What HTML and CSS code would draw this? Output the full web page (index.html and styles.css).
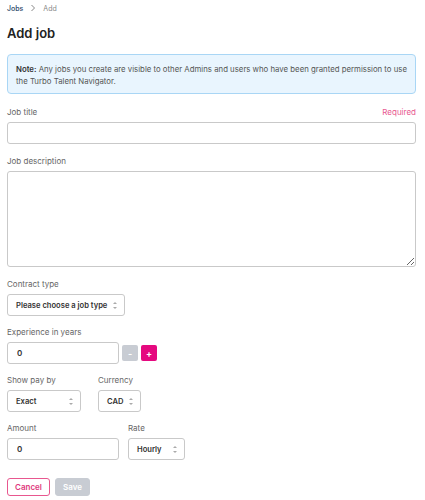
FILE: index.html
```html
<!DOCTYPE html>
<html lang="en">
<head>
	<meta charset="UTF-8">
	<title>Add job</title>
	<link rel="stylesheet" href="styles.css">
</head>
<body>
	<div class="page">
		<div class="crumbs">
			<a href="#">Jobs</a>
			<svg width="8" height="8" viewBox="0 0 8 8"><path d="M2.5 1l3 3-3 3" fill="none" stroke="#888" stroke-width="1"/></svg>
			<span>Add</span>
		</div>
		<h1>Add job</h1>
		<div class="note"><b>Note:</b> Any jobs you create are visible to other Admins and users who have been granted permission to use the Turbo Talent Navigator.</div>

		<div class="field first">
			<div class="label-row"><label>Job title</label><span class="req">Required</span></div>
			<input class="input full" type="text">
		</div>
		<div class="field wide">
			<div class="label-row"><label>Job description</label></div>
			<textarea class="input full area"></textarea>
		</div>
		<div class="field wide">
			<div class="label-row"><label>Contract type</label></div>
			<div class="select w-contract">Please choose a job type <i class="arr"></i></div>
		</div>
		<div class="field">
			<div class="label-row"><label>Experience in years</label></div>
			<div class="row">
				<input class="input w-num" type="text" value="0">
				<button class="step minus">-</button>
				<button class="step plus">+</button>
			</div>
		</div>
		<div class="row cols">
			<div class="field">
				<div class="label-row"><label>Show pay by</label></div>
				<div class="select w-exact">Exact <i class="arr"></i></div>
			</div>
			<div class="field">
				<div class="label-row"><label>Currency</label></div>
				<div class="select w-cad">CAD <i class="arr"></i></div>
			</div>
		</div>
		<div class="row cols2">
			<div class="field">
				<div class="label-row"><label>Amount</label></div>
				<input class="input w-num" type="text" value="0">
			</div>
			<div class="field">
				<div class="label-row"><label>Rate</label></div>
				<div class="select w-rate">Hourly <i class="arr"></i></div>
			</div>
		</div>
		<div class="actions">
			<button class="btn cancel">Cancel</button>
			<button class="btn save">Save</button>
		</div>
	</div>
</body>
</html>
```
FILE: styles.css
```css
* {margin: 0;padding: 0;box-sizing: border-box;}
body {font-family: "Inter", "Noto Sans", sans-serif;color: #333;background: #fff;}
.page {padding: 3px 9px 0 7px;}
.crumbs {display: flex;align-items: center;gap: 6px;font-size: 7px;height: 10px;}
.crumbs a {color: #2d4a6b;text-decoration: none;font-weight: 500;}
.crumbs span {color: #888;}
h1 {font-size: 13px;font-weight: 600;line-height: 17px;color: #222;margin: 12px 0 12px;}
.note {background: #e9f5fe;border: 1px solid #a9d6f5;border-radius: 4px;padding: 8px 8px 6px;font-size: 7.8px;line-height: 12px;color: #555;}
.note b {color: #333;font-weight: 600;}
.field {margin-top: 11px;}
.field.wide {margin-top: 12px;}
.field.first {margin-top: 13px;}
.label-row {display: flex;justify-content: space-between;font-size: 8px;color: #666;height: 10px;margin-bottom: 5px;}
.req {color: #e8578f;}
.input {display: block;height: 22px;border: 1px solid #c9c9c9;border-radius: 3px;font-family: inherit;font-size: 8px;font-weight: 600;color: #333;padding: 0 9px;background: #fff;}
.full {width: 100%;}
.area {height: 96px;resize: vertical;}
.select {position: relative;display: flex;align-items: center;height: 22px;border: 1px solid #c9c9c9;border-radius: 3px;font-size: 7.6px;font-weight: 600;color: #333;padding: 0 8px;white-space: nowrap;}
.arr {position: absolute;right: 6px;top: 7px;width: 5px;height: 7px;}
.arr:before, .arr:after {content: "";position: absolute;left: 0;border-left: 2px solid transparent;border-right: 2px solid transparent;}
.arr:before {top: 0;border-bottom: 2.5px solid #aaa;}
.arr:after {bottom: 0;border-top: 2.5px solid #aaa;}
.w-contract {width: 118px;}
.w-num {width: 112px;}
.w-exact {width: 74px;}
.w-cad {width: 43px;}
.w-rate {width: 57px;}
.row {display: flex;align-items: center;}
.cols {gap: 17px;}
.cols2 {gap: 9px;}
.step {width: 16px;height: 16px;border: none;border-radius: 2px;color: #fff;font-family: inherit;font-weight: 700;font-size: 9px;margin-left: 3px;}
.minus {background: #c8ccd3;}
.plus {background: #e5097f;}
.actions {display: flex;gap: 5px;margin-top: 18px;}
.btn {height: 18px;border-radius: 3px;font-family: inherit;font-size: 8px;font-weight: 600;padding: 0 6px;}
.cancel {background: #fff;border: 1px solid #e8578f;color: #e0397d;width: 43px;}
.save {background: #c8ccd3;border: 1px solid #c8ccd3;color: #fff;width: 35px;}
```
